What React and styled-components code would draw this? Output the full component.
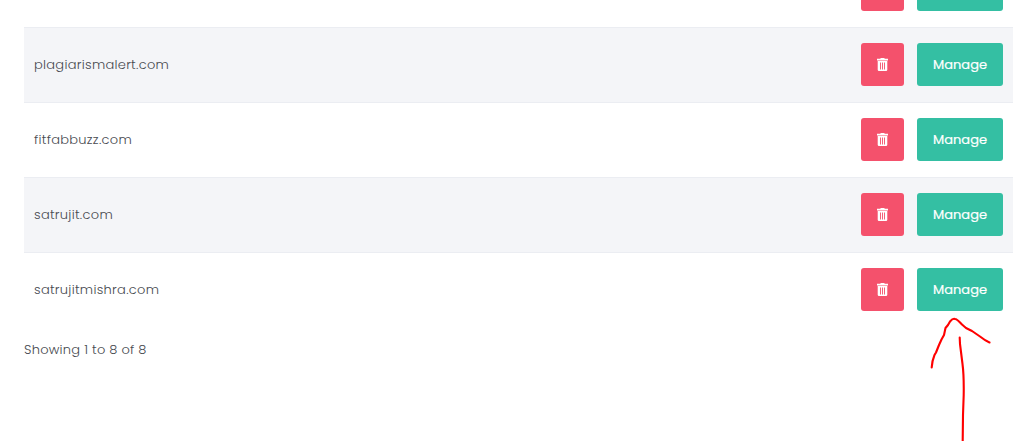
import styled, { createGlobalStyle } from "styled-components";

const GlobalStyle = createGlobalStyle`
  body {
    margin: 0;
    background: #ffffff;
    font-family: Poppins, Inter, "Open Sans", sans-serif;
    font-size: 13px;
    font-weight: 300;
    font-feature-settings: "cv11", "ss03";
    color: #474a50;
  }
`;

const Page = styled.main`
  position: relative;
  box-sizing: border-box;
  height: 441px;
  padding: 0 9px 0 24px;
  overflow: hidden;
`;

const Table = styled.div`
  margin-top: -48px;
`;

const Row = styled.div`
  box-sizing: border-box;
  display: flex;
  align-items: flex-start;
  height: 75px;
  padding: 15px 10px;
  border-top: 1px solid #ebedf2;
  background: ${({ $striped }) => ($striped ? "#f4f5f8" : "#ffffff")};
`;

const Domain = styled.span`
  flex-grow: 1;
  line-height: 43px;
  letter-spacing: 0.28px;
`;

const Actions = styled.div`
  display: flex;
  gap: 13px;
`;

const Button = styled.button`
  display: flex;
  align-items: center;
  justify-content: center;
  width: 86px;
  height: 43px;
  padding: 0;
  border: 0;
  border-radius: 3px;
  background: #34bfa3;
  color: #ffffff;
  font: inherit;
  font-feature-settings: inherit;
  font-weight: 400;
  letter-spacing: 0.03px;
  -webkit-text-stroke: 0.2px #ffffff;
`;

const DeleteButton = styled(Button)`
  width: 43px;
  background: #f4516c;
`;

const Summary = styled.div`
  margin-top: 13px;
  line-height: 20px;
  letter-spacing: 0.25px;
`;

const Arrow = styled.svg`
  position: absolute;
  left: 920px;
  top: 310px;
`;

const rows = [
  { name: "", action: "" },
  { name: "plagiarismalert.com", action: "Manage" },
  { name: "fitfabbuzz.com", action: "Manage" },
  { name: "satrujit.com", action: "Manage" },
  { name: "satrujitmishra.com", action: "Manage" },
];

function TrashIcon() {
  return (
    <svg width="13" height="15" viewBox="0 0 13 15" fill="none">
      <path d="M1 1.700h3.500V1h4v.700H12V3.500H1z" fill="#ffffff" />
      <path
        fillRule="evenodd"
        d="M1.700 4h9.600v8.700q0 1.300-1.300 1.300H3Q1.700 14 1.700 12.700zM4 5.500v7h.900v-7zM6.050 5.500v7h.900v-7zM8.100 5.500v7h.900v-7z"
        fill="#ffffff"
      />
    </svg>
  );
}

export default function App() {
  return (
    <Page>
      <GlobalStyle />
      <Table>
        {rows.map((row, index) => (
          <Row key={index} $striped={index % 2 === 1}>
            <Domain>{row.name}</Domain>
            <Actions>
              <DeleteButton aria-label="Delete">
                <TrashIcon />
              </DeleteButton>
              <Button>{row.action}</Button>
            </Actions>
          </Row>
        ))}
      </Table>
      <Summary>Showing 1 to 8 of 8</Summary>
      <Arrow width="80" height="131" viewBox="0 0 80 131" fill="none">
        <path
          d="M11.700 57.500C12 53 13 48.500 14.500 45L16 42.500L19 35L21.500 29.500L24 25L25.500 18L28 15L30 11.500Q33 8 35 9Q37 9 42 14.500L46 18L52 21L60 26.500Q65 30.500 69.500 32.500M39.700 27.500L40 34L42.500 54Q44 65 43.700 85L43 105L42.700 131"
          stroke="#ff0000"
          strokeWidth="2.100"
          strokeLinecap="round"
          strokeLinejoin="round"
        />
      </Arrow>
    </Page>
  );
}
